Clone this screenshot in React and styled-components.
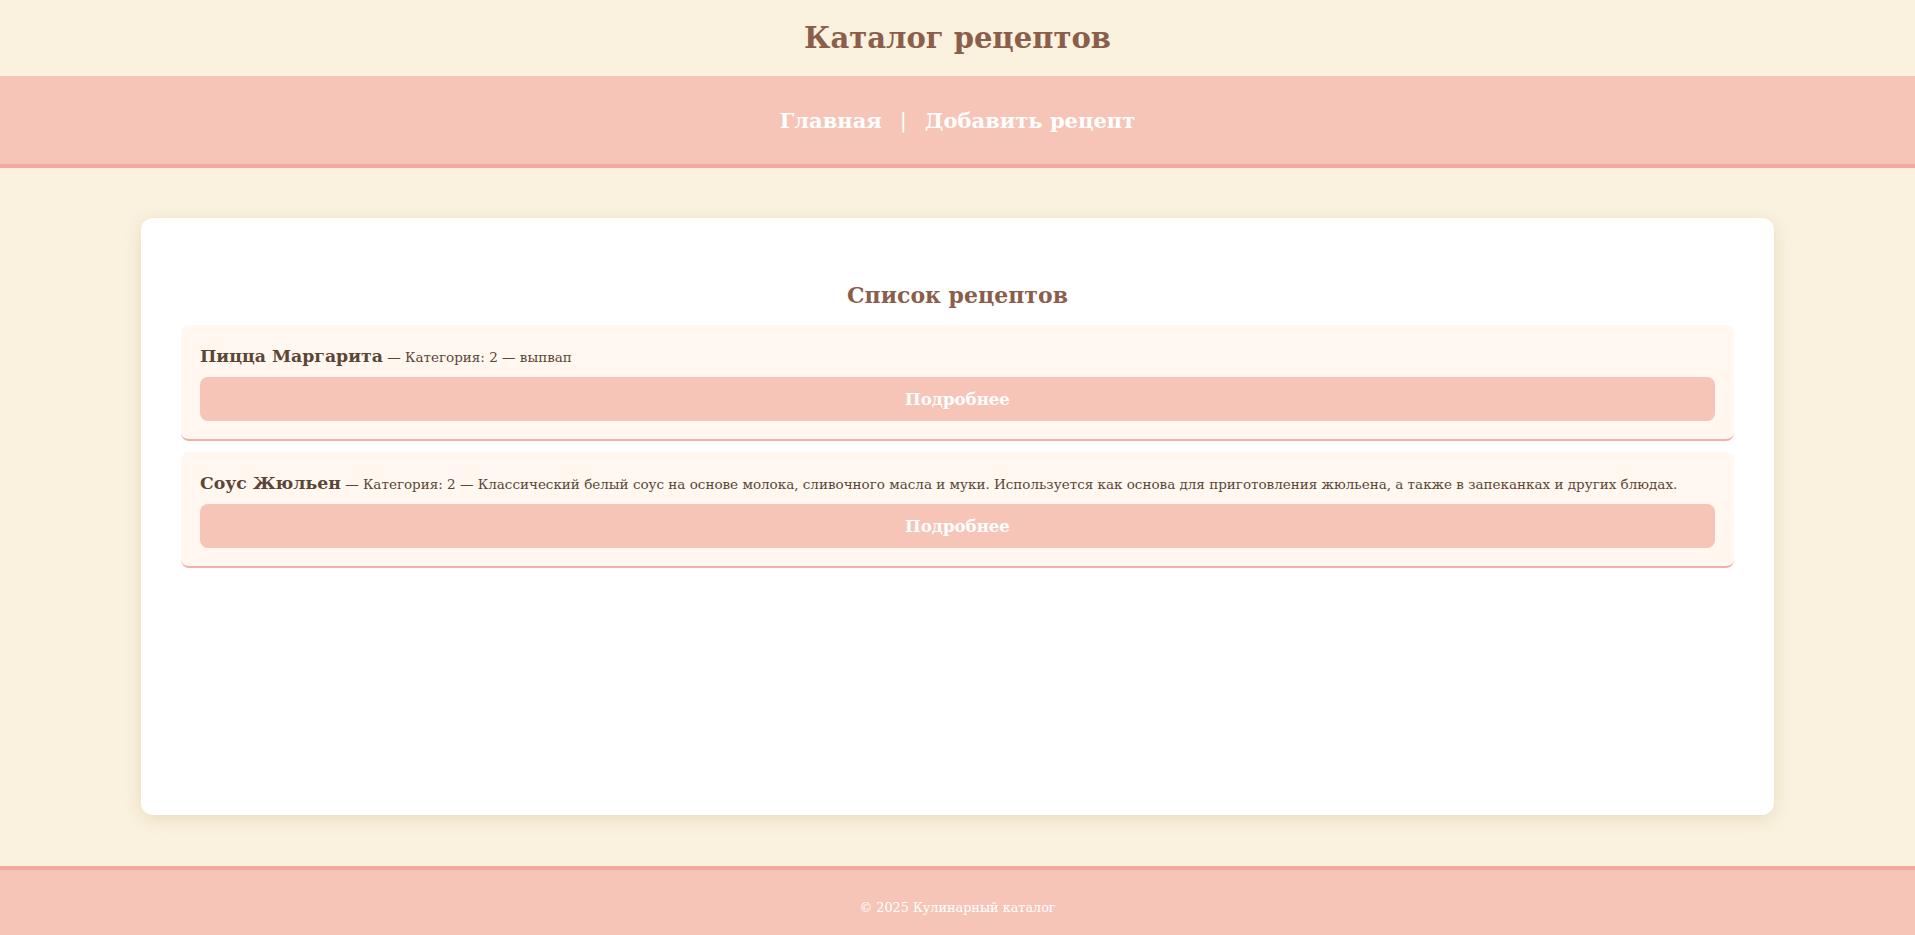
import React from 'react';
import styled, { createGlobalStyle } from 'styled-components';

const GlobalStyle = createGlobalStyle`
  body {
    margin: 0;
    background: #faf2df;
    font-family: Georgia, "DejaVu Serif", serif;
    color: #5b4636;
  }
`;

const Header = styled.header`
  padding: 20px 0;
  text-align: center;
  h1 {
    margin: 0;
    font-size: 29px;
    line-height: 36px;
    color: #8b5e4b;
  }
`;

const Nav = styled.nav`
  display: flex;
  justify-content: center;
  align-items: center;
  gap: 18px;
  height: 88px;
  background: #f6c5b8;
  border-bottom: 4px solid #f2a9a0;
  font-size: 21px;
  font-weight: bold;
  color: #fff;
`;

const NavLink = styled.a`
  color: #fff;
  text-decoration: none;
`;

const Divider = styled.span`
  font-weight: normal;
`;

const Main = styled.main`
  padding: 50px 141px 51px;
`;

const Card = styled.section`
  box-sizing: border-box;
  min-height: 597px;
  padding: 40px;
  background: #fff;
  border-radius: 12px;
  box-shadow: 0 4px 18px rgba(170, 140, 80, 0.22);
  h2 {
    margin: 24px 0 16px;
    font-size: 22px;
    line-height: 27px;
    text-align: center;
    color: #8b5e4b;
  }
`;

const List = styled.div`
  display: flex;
  flex-direction: column;
  gap: 11px;
`;

const Item = styled.div`
  display: flex;
  flex-direction: column;
  gap: 9px;
  padding: 20px 19px 18px;
  background: #fff7f0;
  border-radius: 8px;
  border-bottom: 2px solid #f4b0a6;
`;

const ItemText = styled.p`
  margin: 0;
  line-height: 22px;
  font-size: 13.5px;
  color: #5b4636;
  strong {
    font-size: 17.3px;
  }
`;

const MoreButton = styled.button`
  height: 44px;
  border: none;
  border-radius: 8px;
  background: #f6c5b8;
  color: #fff;
  font-family: inherit;
  font-size: 16.6px;
  font-weight: bold;
  cursor: pointer;
`;

const Footer = styled.footer`
  padding: 30px 0;
  background: #f6c5b8;
  border-top: 4px solid #f2a9a0;
  text-align: center;
  color: #fff;
  font-size: 12.8px;
  line-height: 16px;
`;

const recipes = [
  { id: 1, name: 'Пицца Маргарита', category: 2, description: 'выпвап' },
  {
    id: 2,
    name: 'Соус Жюльен',
    category: 2,
    description:
      'Классический белый соус на основе молока, сливочного масла и муки. Используется как основа для приготовления жюльена, а также в запеканках и других блюдах.',
  },
];

export default function App() {
  return (
    <>
      <GlobalStyle />
      <Header>
        <h1>Каталог рецептов</h1>
      </Header>
      <Nav>
        <NavLink href="#">Главная</NavLink>
        <Divider>|</Divider>
        <NavLink href="#">Добавить рецепт</NavLink>
      </Nav>
      <Main>
        <Card>
          <h2>Список рецептов</h2>
          <List>
            {recipes.map((r) => (
              <Item key={r.id}>
                <ItemText>
                  <strong>{r.name}</strong> — Категория: {r.category} — {r.description}
                </ItemText>
                <MoreButton>Подробнее</MoreButton>
              </Item>
            ))}
          </List>
        </Card>
      </Main>
      <Footer>© 2025 Кулинарный каталог</Footer>
    </>
  );
}
